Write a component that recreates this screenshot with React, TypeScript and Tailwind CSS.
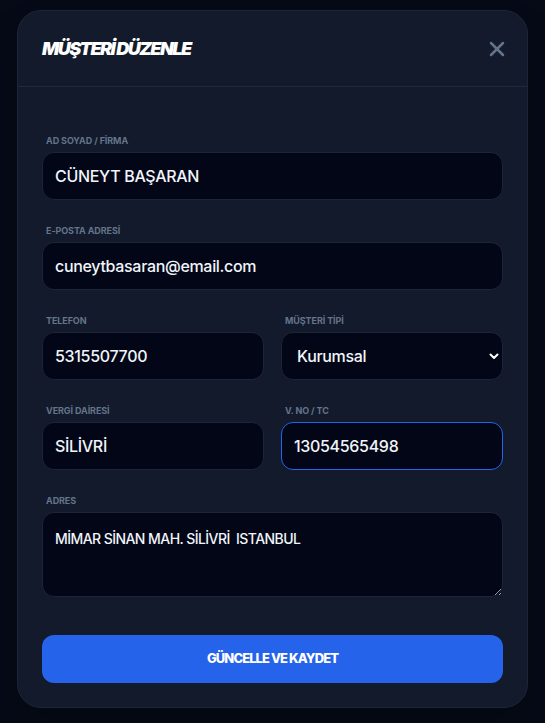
import React from "react";
import { X } from "lucide-react";

const font = { fontFamily: "Inter, 'Noto Sans', sans-serif" };

function Label({ children }: { children: React.ReactNode }) {
  return (
    <label className="block h-[12px] mb-[5px] pl-[4px] text-[9px] leading-[12px] font-bold uppercase text-[#64748b] tracking-[-0.01em]">
      {children}
    </label>
  );
}

const inputCls =
  "w-full h-12 rounded-xl bg-[#020617] border border-[#1c2638] px-3 text-[16px] font-medium text-[#f1f5f9] outline-none tracking-[-0.02em]";

export default function App() {
  return (
    <div
      className="min-h-screen bg-[#050a16] flex justify-center pt-[10px] pb-[15px]"
      style={font}
    >
      <div className="w-[511px] rounded-[24px] border border-[#1c2537] bg-[#121a2b] shadow-2xl">
        <div className="h-[76px] flex items-center justify-between pl-6 pr-[18px] border-b border-[#1f2a3c]">
          <h2 className="text-[18px] font-black italic text-white tracking-[-0.085em] leading-none">
            MÜŞTERİ DÜZENLE
          </h2>
          <X size={24} strokeWidth={2.5} className="text-[#64748b]" />
        </div>
        <div className="pt-12 px-6 pb-6">
          <div className="flex flex-col gap-[25px]">
            <div>
              <Label>Ad Soyad / Fİrma</Label>
              <input className={inputCls} defaultValue="CÜNEYT BAŞARAN" />
            </div>
            <div>
              <Label>E-Posta Adresİ</Label>
              <input className={inputCls} defaultValue="cuneytbasaran@email.com" />
            </div>
            <div className="grid grid-cols-2 gap-x-[17px]">
              <div>
                <Label>Telefon</Label>
                <input className={inputCls} defaultValue="5315507700" />
              </div>
              <div>
                <Label>MÜŞTERİ TİPİ</Label>
                <div className="relative">
                  <select
                    className="w-full h-12 appearance-none rounded-xl bg-[#020617] border border-[#1c2638] pl-[15px] text-[16px] font-medium text-[#f1f5f9] outline-none tracking-[-0.02em]"
                    defaultValue="Kurumsal"
                  >
                    <option>Bireysel</option>
                    <option>Kurumsal</option>
                  </select>
                  <svg
                    className="pointer-events-none absolute right-[4px] top-1/2 -translate-y-1/2"
                    width="10"
                    height="8"
                    viewBox="0 0 10 8"
                    fill="none"
                  >
                    <path d="M1.5 2.5 5 6 8.5 2.5" stroke="#ffffff" strokeWidth="2" strokeLinecap="round" strokeLinejoin="round" />
                  </svg>
                </div>
              </div>
            </div>
            <div className="grid grid-cols-2 gap-x-[17px]">
              <div>
                <Label>VERGİ DAİRESİ</Label>
                <input className={inputCls} defaultValue="SİLİVRİ" />
              </div>
              <div>
                <Label>V. No / TC</Label>
                <input
                  className="w-full h-12 rounded-xl bg-[#020617] border border-[#2563eb] px-3 text-[16px] font-medium text-[#f1f5f9] outline-none tracking-[-0.02em]"
                  defaultValue="13054565498"
                />
              </div>
            </div>
            <div>
              <Label>Adres</Label>
              <textarea
                className="block w-full h-[85px] rounded-xl bg-[#020617] border border-[#1c2638] px-3 pt-[16px] text-[14px] leading-5 font-medium text-[#f1f5f9] outline-none tracking-[-0.04em]"
                defaultValue="MİMAR SİNAN MAH. SİLİVRİ  ISTANBUL"
              />
            </div>
          </div>
          <button className="mt-[38px] w-full h-12 rounded-xl bg-[#2563eb] text-white text-[13px] font-extrabold tracking-[-0.07em]">
            GÜNCELLE VE KAYDET
          </button>
        </div>
      </div>
    </div>
  );
}
